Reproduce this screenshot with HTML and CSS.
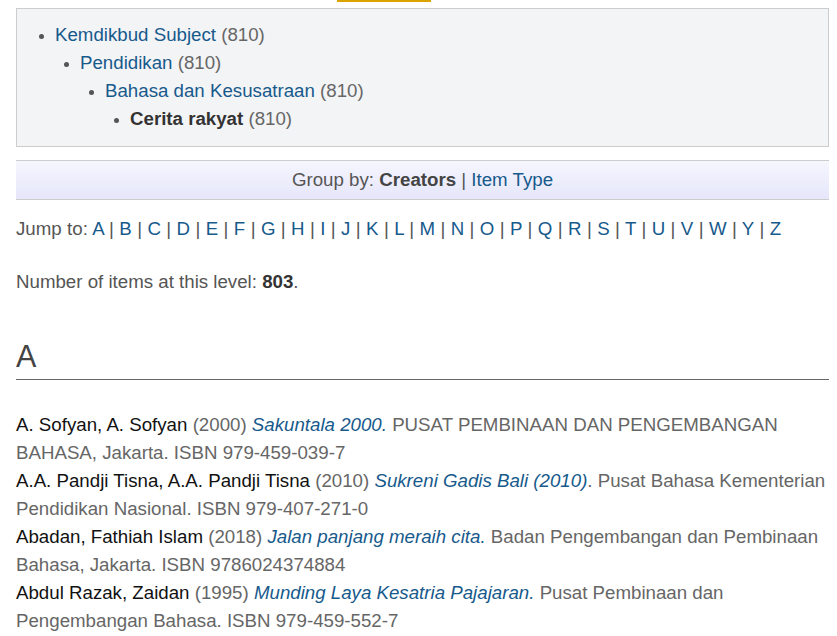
FILE: index.html
```html
<!DOCTYPE html>
<html lang="id">
<head>
  <meta charset="UTF-8">
  <meta name="viewport" content="width=device-width, initial-scale=1.0">
  <title>Cerita rakyat</title>
  <link rel="stylesheet" href="styles.css">
</head>
<body>
  <div id="page">
    <div class="top-tab"></div>

    <div id="subject-path">
      <ul>
        <li><a href="#">Kemdikbud Subject</a> <span class="count">(810)</span>
          <ul>
            <li><a href="#">Pendidikan</a> <span class="count">(810)</span>
              <ul>
                <li><a href="#">Bahasa dan Kesusatraan</a> <span class="count">(810)</span>
                  <ul>
                    <li><strong>Cerita rakyat</strong> <span class="count">(810)</span></li>
                  </ul>
                </li>
              </ul>
            </li>
          </ul>
        </li>
      </ul>
    </div>

    <div id="group-by">Group by: <strong>Creators</strong> | <a href="#">Item Type</a></div>

    <div id="jump-to">Jump to:
      <a href="#">A</a> | <a href="#">B</a> | <a href="#">C</a> | <a href="#">D</a> | <a href="#">E</a> | <a href="#">F</a> | <a href="#">G</a> | <a href="#">H</a> | <a href="#">I</a> | <a href="#">J</a> | <a href="#">K</a> | <a href="#">L</a> | <a href="#">M</a> | <a href="#">N</a> | <a href="#">O</a> | <a href="#">P</a> | <a href="#">Q</a> | <a href="#">R</a> | <a href="#">S</a> | <a href="#">T</a> | <a href="#">U</a> | <a href="#">V</a> | <a href="#">W</a> | <a href="#">Y</a> | <a href="#">Z</a>
    </div>

    <div id="item-count">Number of items at this level: <strong>803</strong>.</div>

    <h2 class="letter">A</h2>

    <div class="items">
      <p><span class="person">A. Sofyan, A. Sofyan</span> <span class="meta">(2000)</span> <a href="#"><em>Sakuntala 2000.</em></a> <span class="meta">PUSAT PEMBINAAN DAN PENGEMBANGAN BAHASA, Jakarta. ISBN 979-459-039-7</span></p>
      <p><span class="person">A.A. Pandji Tisna, A.A. Pandji Tisna</span> <span class="meta">(2010)</span> <a href="#"><em>Sukreni Gadis Bali (2010)</em></a><span class="meta">. Pusat Bahasa Kementerian Pendidikan Nasional. ISBN 979-407-271-0</span></p>
      <p><span class="person">Abadan, Fathiah Islam</span> <span class="meta">(2018)</span> <a href="#"><em>Jalan panjang meraih cita.</em></a> <span class="meta">Badan Pengembangan dan Pembinaan Bahasa, Jakarta. ISBN 9786024374884</span></p>
      <p><span class="person">Abdul Razak, Zaidan</span> <span class="meta">(1995)</span> <a href="#"><em>Munding Laya Kesatria Pajajaran.</em></a> <span class="meta">Pusat Pembinaan dan Pengembangan Bahasa. ISBN 979-459-552-7</span></p>
    </div>
  </div>
</body>
</html>
```

FILE: styles.css
```css
body { margin: 0; font-family: "Liberation Sans", Arial, sans-serif; font-size: 18.7px; line-height: 28px; color: #555; background-color: #fff; }
a { color: #175a8c; text-decoration: none; }
#page { padding: 0 8px 0 16px; }
.top-tab { width: 94px; height: 2px; margin-left: 321px; background-color: #dba300; }
#subject-path { margin-top: 6px; padding: 12px 0 13px; background-color: #f3f4f6; border: 1px solid #ccc; }
#subject-path ul { margin: 0; padding-left: 25px; list-style-type: disc; }
#subject-path > ul { padding-left: 38px; }
#subject-path li { color: #555; }
#subject-path li::marker { font-size: 15px; color: #555; }
#subject-path strong { color: #333; }
.count { color: #666; }
#group-by { margin-top: 13px; padding: 5px 0 5px; text-align: center; border-top: 1px solid #ccc; border-bottom: 1px solid #ccc; background: linear-gradient(#f6f6fe, #e5e6fa); }
#group-by strong { color: #444; }
#jump-to { margin-top: 15px; word-spacing: 0.2px; }
#item-count { margin-top: 25px; }
#item-count strong { color: #333; }
.letter { margin: 42px 0 0; padding-bottom: 5px; font-size: 30.5px; line-height: 36px; font-weight: normal; color: #444; border-bottom: 1px solid #666; }
.items { margin-top: 31px; }
.items p { margin: 0; }
.person { color: #111; }
.meta { color: #666; }
```
